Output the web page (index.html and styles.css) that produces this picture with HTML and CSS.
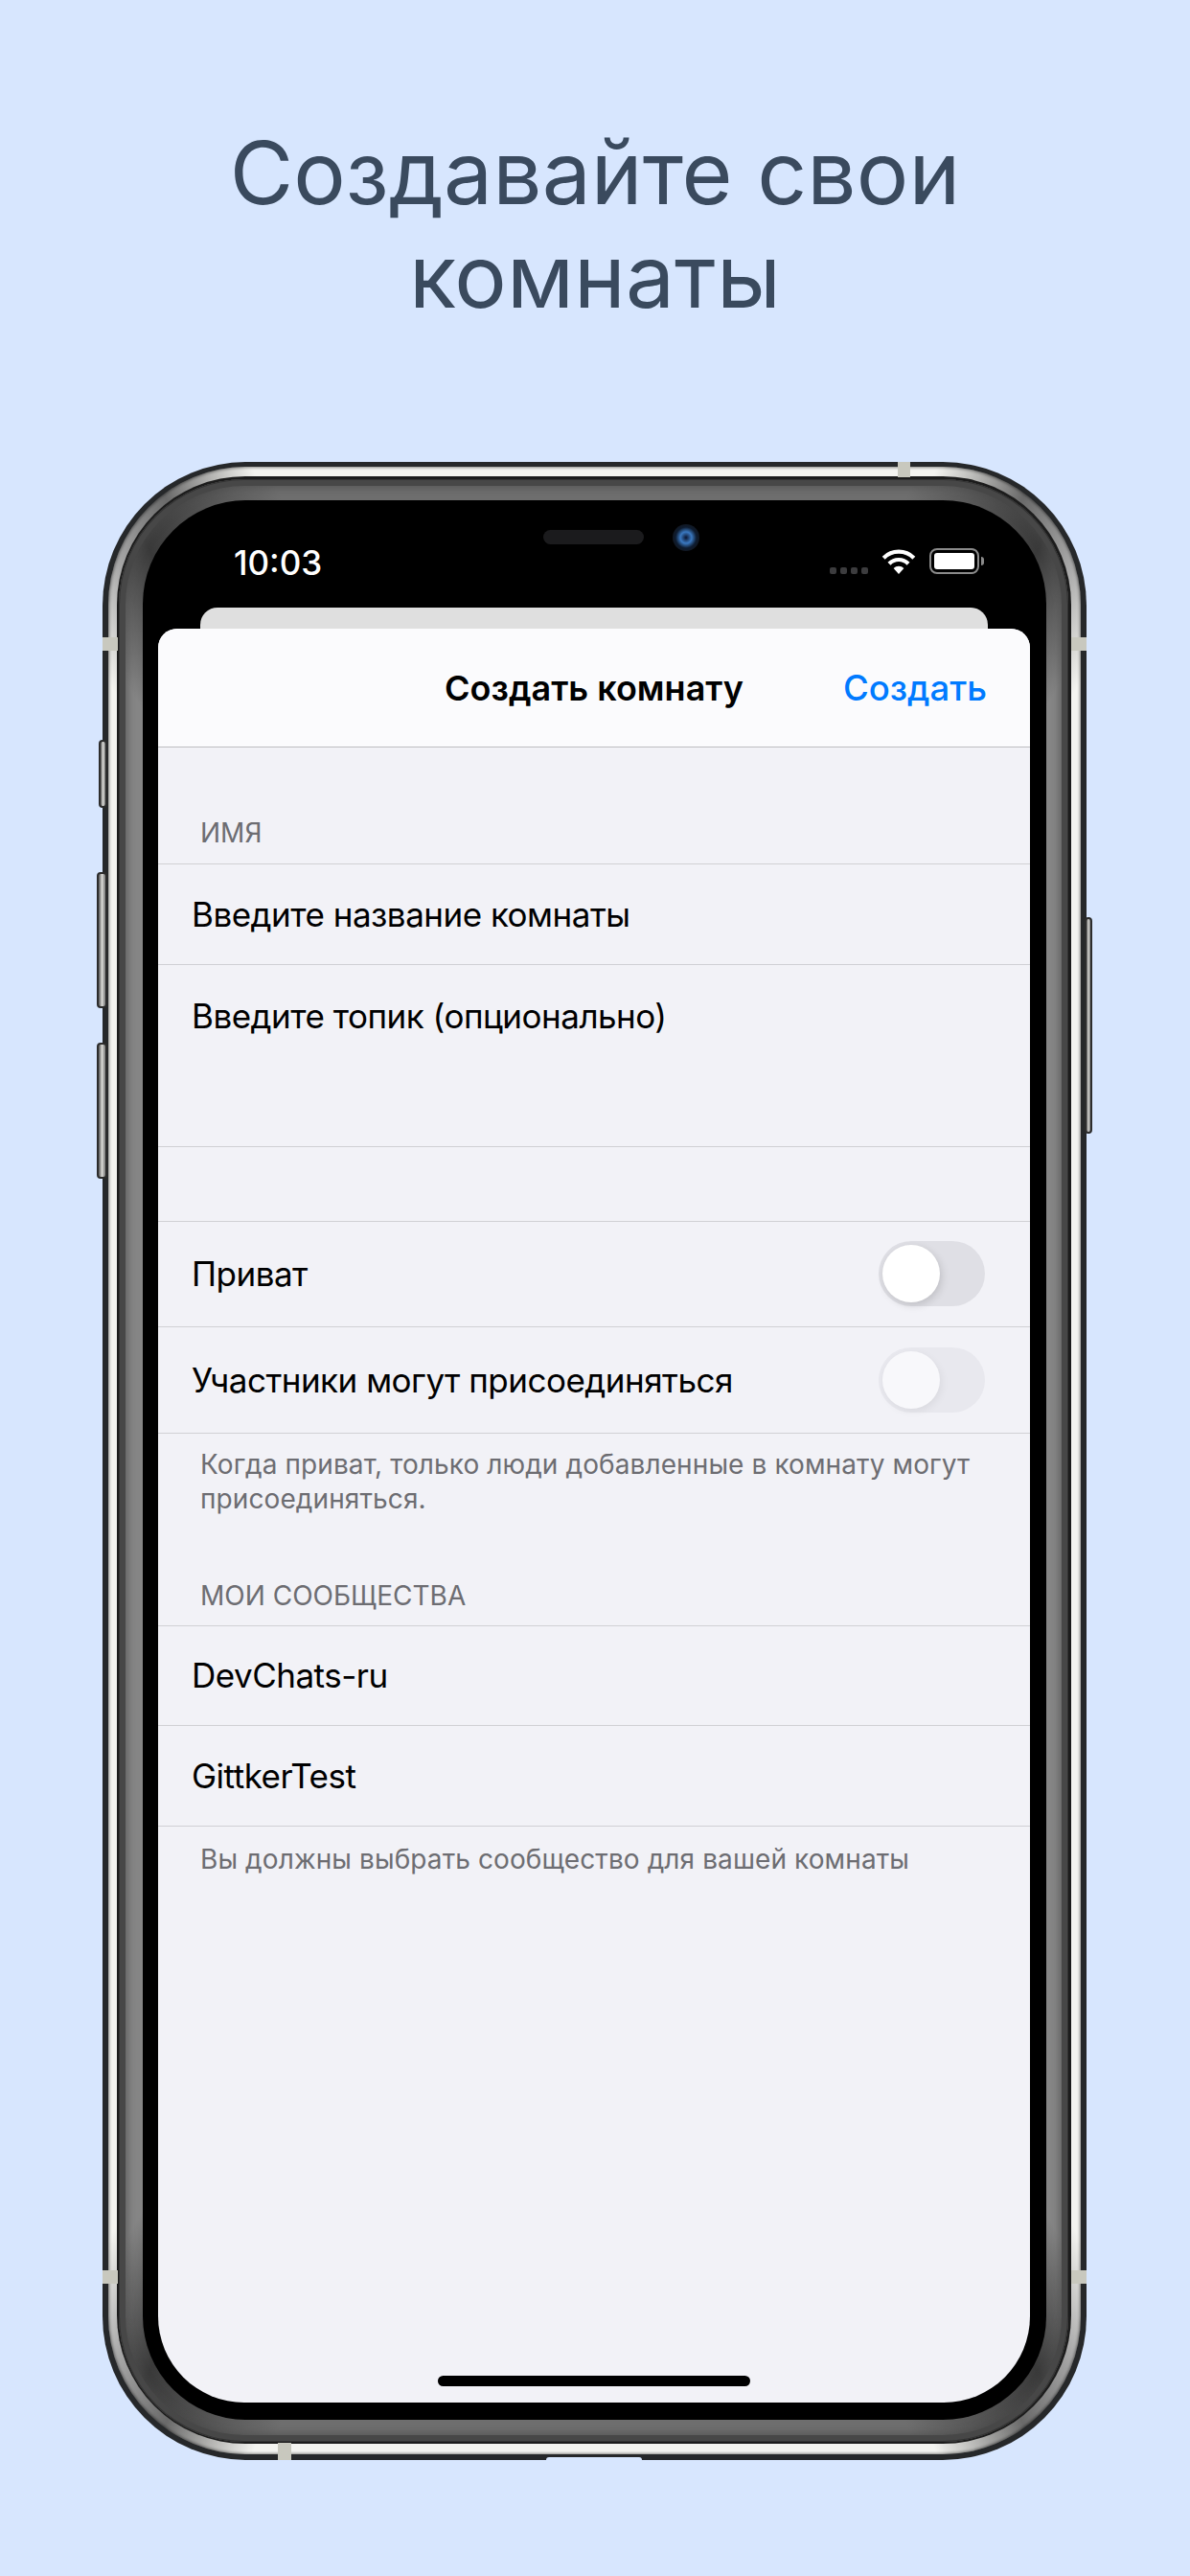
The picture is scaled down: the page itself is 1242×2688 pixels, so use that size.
FILE: index.html
```html
<!DOCTYPE html>
<html>
<head>
<meta charset="utf-8">
<link rel="stylesheet" href="styles.css">
<title>Создавайте свои комнаты</title>
</head>
<body>
<h1 class="headline">Создавайте свои<br>комнаты</h1>

<div class="phone">
  <!-- side buttons -->
  <span class="btn btn-mute"></span>
  <span class="btn btn-up"></span>
  <span class="btn btn-down"></span>
  <span class="btn btn-power"></span>

  <!-- antenna bands -->
  <span class="band band-top"></span>
  <span class="band band-left1"></span>
  <span class="band band-right1"></span>
  <span class="band band-left2"></span>
  <span class="band band-right2"></span>
  <span class="band band-bottom"></span>
  <span class="bottom-cut"></span>

  <div class="chrome">
    <div class="groove">
      <div class="bezel">
        <div class="black">
          <div class="speaker"></div>
          <div class="camera"></div>

          <div class="statusbar">
            <span class="time">10:03</span>
            <div class="status-icons">
              <div class="signal"><i></i><i></i><i></i><i></i></div>
              <svg class="wifi" width="36" height="28" viewBox="0 0 36 28">
                <path d="M2.2 10.2A22.5 22.5 0 0 1 33.8 10.2" fill="none" stroke="#fff" stroke-width="4.2"/>
                <path d="M8 16.2A14 14 0 0 1 28 16.2" fill="none" stroke="#fff" stroke-width="4.2"/>
                <path d="M12.6 21A7.6 7.6 0 0 1 23.4 21L18 27Z" fill="#fff"/>
              </svg>
              <div class="battery"><div class="battery-fill"></div></div>
              <div class="battery-cap"></div>
            </div>
          </div>

          <div class="backsheet"></div>

          <div class="sheet">
            <div class="navbar">
              <span class="nav-title">Создать комнату</span>
              <span class="nav-action">Создать</span>
            </div>

            <div class="section-label first">ИМЯ</div>
            <div class="list">
              <div class="row">Введите название комнаты</div>
              <div class="row row-tall">Введите топик (опционально)</div>
            </div>

            <div class="spacer"></div>

            <div class="list">
              <div class="row row-switch">
                Приват
                <div class="switch"><div class="knob"></div></div>
              </div>
              <div class="row row-switch">
                Участники могут присоединяться
                <div class="switch disabled"><div class="knob"></div></div>
              </div>
            </div>
            <p class="note">Когда приват, только люди добавленные в комнату могут присоединяться.</p>

            <div class="section-label">МОИ СООБЩЕСТВА</div>
            <div class="list">
              <div class="row">DevChats-ru</div>
              <div class="row">GittkerTest</div>
            </div>
            <p class="note note-last">Вы должны выбрать сообщество для вашей комнаты</p>

            <div class="home-indicator"></div>
          </div>
        </div>
      </div>
    </div>
  </div>
</div>
</body>
</html>
```

FILE: styles.css
```css
html, body {
	margin: 0;
	padding: 0;
}
body {
	width: 1242px;
	height: 2688px;
	overflow: hidden;
	background-color: #d7e6fe;
	font-family: Inter, "Noto Sans", sans-serif;
	color: #000;
}
.headline {
	margin: 0;
	padding-top: 126px;
	height: 482px;
	box-sizing: border-box;
	text-align: center;
	font-size: 91px;
	line-height: 108px;
	font-weight: 400;
	letter-spacing: 0.05px;
	color: #3a4a5e;
}

/* phone frame, ring by ring from the outside in */
.phone {
	position: relative;
	box-sizing: border-box;
	width: 1027px;
	height: 2085px;
	margin-left: 107px;
	padding: 5px 6px 6px 6px;
	border-radius: 150px;
	background-color: #26282a;
}
.chrome {
	height: 100%;
	box-sizing: border-box;
	padding: 10px 10px 11px 9px;
	border-radius: 144px;
	background: conic-gradient(#f4f4f0 0deg, #f4f4f0 19deg, #6a6a6a 24deg, #a8a8a8 28deg, #f4f4f0 32deg,
		#f4f4f0 148deg, #a8a8a8 152deg, #6a6a6a 156deg, #f4f4f0 161deg,
		#f4f4f0 199deg, #6a6a6a 204deg, #a8a8a8 208deg, #f4f4f0 212deg,
		#f4f4f0 328deg, #a8a8a8 332deg, #6a6a6a 336deg, #f4f4f0 341deg, #f4f4f0 360deg);
	box-shadow: inset 0 0 3px 1px rgba(0, 0, 0, 0.45);
}
.groove {
	height: 100%;
	box-sizing: border-box;
	padding: 3px 3px 2px 2px;
	border-radius: 134px;
	background-color: #1c1c1c;
}
.bezel {
	height: 100%;
	box-sizing: border-box;
	padding: 22px 23px 23px 25px;
	border-radius: 131px;
	background: conic-gradient(#6e6e6e 0deg, #6e6e6e 18deg, #3a3a3a 26deg, #858585 31deg,
		#858585 149deg, #3a3a3a 154deg, #6e6e6e 162deg,
		#6e6e6e 198deg, #3a3a3a 206deg, #858585 211deg,
		#858585 329deg, #3a3a3a 334deg, #6e6e6e 342deg, #6e6e6e 360deg);
	box-shadow: inset 0 0 0 1px #333, inset 0 0 0 7px #474747, inset 0 0 6px 10px rgba(71, 71, 71, 0.5);
}
.black {
	position: relative;
	display: flex;
	flex-direction: column;
	height: 100%;
	box-sizing: border-box;
	padding: 0 17px 18px 16px;
	border-radius: 108px;
	background-color: #000;
}

.speaker {
	position: absolute;
	left: 418px;
	top: 31px;
	width: 105px;
	height: 15px;
	border-radius: 8px;
	background-color: #1b1b1d;
}
.camera {
	position: absolute;
	left: 553px;
	top: 25px;
	width: 28px;
	height: 28px;
	border-radius: 50%;
	background: radial-gradient(circle, #0a1530 0, #3a78c0 30%, #0e1c30 55%, #11161e 75%);
}

.statusbar {
	display: flex;
	justify-content: space-between;
	align-items: flex-start;
	height: 112px;
	flex: none;
	padding: 0 48px 0 79px;
	box-sizing: border-box;
	color: #fff;
}
.time {
	margin-top: 45px;
	font-size: 35px;
	line-height: 40px;
	font-weight: 500;
}
.status-icons {
	display: flex;
	align-items: flex-start;
	margin-top: 50px;
}
.signal {
	display: flex;
	gap: 4px;
	margin-top: 20px;
	margin-right: 14px;
}
.signal i {
	width: 7px;
	height: 7px;
	border-radius: 2px;
	background-color: #3c3c3e;
}
.wifi {
	margin-right: 14px;
}
.battery {
	box-sizing: border-box;
	width: 52px;
	height: 27px;
	padding: 3px;
	border: 2px solid #8a8a8a;
	border-radius: 8px;
}
.battery-fill {
	height: 100%;
	border-radius: 3px;
	background-color: #fff;
}
.battery-cap {
	width: 3px;
	height: 9px;
	margin: 9px 0 0 2px;
	border-radius: 0 3px 3px 0;
	background-color: #8a8a8a;
}

.backsheet {
	flex: none;
	height: 22px;
	margin: 0 44px;
	border-radius: 18px 18px 0 0;
	background-color: #dfdfdf;
}
.sheet {
	position: relative;
	flex: 1;
	border-radius: 20px 20px 90px 90px;
	background-color: #f2f2f7;
	overflow: hidden;
}
.navbar {
	position: relative;
	display: flex;
	align-items: center;
	justify-content: center;
	height: 123px;
	border-bottom: 1px solid #bdbdc1;
	background-color: #fbfbfd;
}
.nav-title {
	font-size: 36px;
	font-weight: 600;
}
.nav-action {
	position: absolute;
	right: 45px;
	font-size: 36.5px;
	font-weight: 500;
	color: #007aff;
}

.section-label {
	padding: 66px 0 0 44px;
	height: 114px;
	box-sizing: border-box;
	font-size: 28px;
	line-height: 34px;
	color: #6d6d72;
}
.section-label.first {
	padding-top: 72px;
	height: 121px;
}
.list {
	border-top: 1px solid #d0d0d4;
}
.row {
	display: flex;
	align-items: center;
	justify-content: space-between;
	box-sizing: border-box;
	height: 104.5px;
	padding: 0 47px 0 35px;
	border-bottom: 1px solid #d0d0d4;
	font-size: 35px;
	letter-spacing: -0.5px;
}
.row-tall {
	align-items: flex-start;
	height: 190px;
	padding-top: 32px;
}
.row-switch {
	height: 110.5px;
}
.spacer {
	height: 77px;
}
.switch {
	box-sizing: border-box;
	width: 111px;
	height: 68px;
	padding: 4px;
	border-radius: 34px;
	background-color: #dfdfe5;
}
.knob {
	width: 60px;
	height: 60px;
	border-radius: 50%;
	background-color: #fff;
	box-shadow: 2px 3px 8px rgba(0, 0, 0, 0.14);
}
.switch.disabled {
	background-color: #e8e8ee;
}
.switch.disabled .knob {
	background-color: #f8f8fb;
	box-shadow: 2px 3px 8px rgba(0, 0, 0, 0.06);
}
.note {
	margin: 0;
	padding: 14px 44px 0 44px;
	font-size: 28px;
	line-height: 36px;
	letter-spacing: 0.1px;
	color: #6d6d72;
}
.note-last {
	padding-top: 16px;
}
.home-indicator {
	position: absolute;
	left: 292px;
	bottom: 17px;
	width: 326px;
	height: 11px;
	border-radius: 6px;
	background-color: #000;
}

.btn {
	position: absolute;
	box-sizing: border-box;
	border: 2px solid #2c2c2c;
	border-radius: 4px;
	background: linear-gradient(90deg, #555, #d8d8d4 50%, #777);
}
.btn-mute {
	left: -4px;
	top: 290px;
	width: 9px;
	height: 71px;
}
.btn-up {
	left: -6px;
	top: 428px;
	width: 11px;
	height: 142px;
}
.btn-down {
	left: -6px;
	top: 606px;
	width: 11px;
	height: 142px;
}
.btn-power {
	right: -6px;
	top: 475px;
	width: 8px;
	height: 226px;
}

.band {
	position: absolute;
	z-index: 2;
	background-color: #c8c8be;
}
.band-top {
	left: 830px;
	top: 0;
	width: 13px;
	height: 16px;
}
.band-left1, .band-right1, .band-left2, .band-right2 {
	width: 16px;
	height: 14px;
}
.band-left1 {
	left: 0;
	top: 183px;
}
.band-right1 {
	right: 0;
	top: 183px;
}
.band-left2 {
	left: 0;
	top: 1887px;
}
.band-right2 {
	right: 0;
	top: 1887px;
}
.band-bottom {
	left: 183px;
	bottom: 0;
	width: 14px;
	height: 18px;
}
.bottom-cut {
	position: absolute;
	left: 463px;
	bottom: 0;
	width: 100px;
	height: 3px;
	border-radius: 8px 8px 0 0;
	background-color: #d7e6fe;
}
```
